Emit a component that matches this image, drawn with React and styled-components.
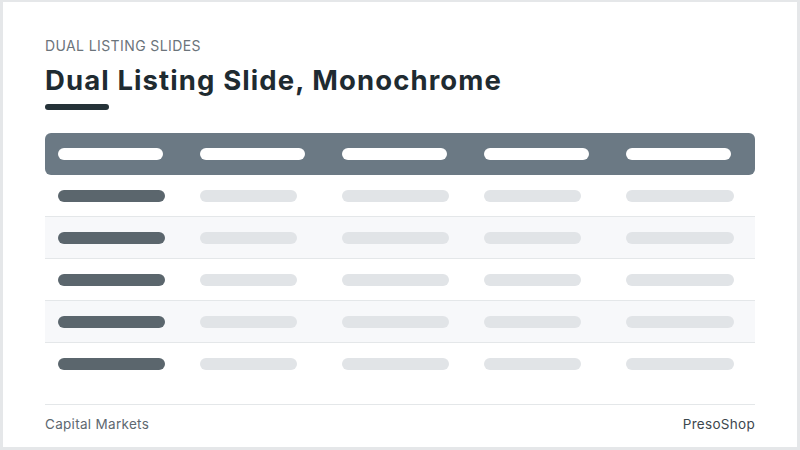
import React from "react";
import styled, { createGlobalStyle } from "styled-components";

const Global = createGlobalStyle`
  html, body { margin: 0; padding: 0; background: #ffffff; }
  * { box-sizing: border-box; }
`;

const Slide = styled.div`
  width: 800px;
  height: 450px;
  border: 3px solid #e5e7e9;
  border-top-width: 2px;
  background: #ffffff;
  padding: 34px 42px 0 42px;
  font-family: "Inter", "Noto Sans", sans-serif;
  display: flex;
  flex-direction: column;
`;

const Eyebrow = styled.div`
  font-size: 14px;
  line-height: 20px;
  color: #6b747b;
  letter-spacing: 0.4px;
`;

const Title = styled.h1`
  margin: 7px 0 0 0;
  font-size: 27.5px;
  line-height: 34px;
  font-weight: 700;
  color: #1f2b31;
  letter-spacing: 1.1px;
`;

const Accent = styled.div`
  width: 64px;
  height: 6px;
  border-radius: 3px;
  background: #253238;
  margin-top: 7px;
`;

const Table = styled.div`
  margin-top: 23px;
  display: flex;
  flex-direction: column;
`;

const Row = styled.div`
  display: grid;
  grid-template-columns: repeat(5, 1fr);
  height: 42px;
  align-items: center;
  background: ${(p) => (p.$head ? "#6b7984" : p.$shade ? "#f7f8fa" : "#ffffff")};
  border-radius: ${(p) => (p.$head ? "6px" : "0")};
  border-bottom: ${(p) => (p.$line ? "1px solid #e4e7e9" : "none")};
`;

const Cell = styled.div`
  padding-left: 13px;
  display: flex;
  align-items: center;
`;

const Pill = styled.div`
  height: 12px;
  border-radius: 6px;
  width: ${(p) => p.$w}px;
  background: ${(p) =>
    p.$tone === "head" ? "#ffffff" : p.$tone === "dark" ? "#5b666d" : "#e1e4e7"};
`;

const Footer = styled.div`
  margin-top: 19px;
  border-top: 1px solid #e4e7e9;
  display: flex;
  justify-content: space-between;
  align-items: center;
  padding-top: 10px;
  font-size: 13.5px;
  line-height: 18px;
  letter-spacing: 0.3px;
`;

const FootLeft = styled.span`
  color: #5e6870;
`;

const FootRight = styled.span`
  color: #3d474e;
`;

const bodyWidths = [107, 97, 107, 97, 108];

export default function App() {
  const rows = [0, 1, 2, 3, 4];
  return (
    <>
      <Global />
      <Slide>
        <Eyebrow>DUAL LISTING SLIDES</Eyebrow>
        <Title>Dual Listing Slide, Monochrome</Title>
        <Accent />
        <Table>
          <Row $head>
            {bodyWidths.map((_, i) => (
              <Cell key={i}>
                <Pill $tone="head" $w={105} />
              </Cell>
            ))}
          </Row>
          {rows.map((r) => (
            <Row key={r} $shade={r % 2 === 1} $line={r < 4}>
              {bodyWidths.map((w, i) => (
                <Cell key={i}>
                  <Pill $tone={i === 0 ? "dark" : "light"} $w={w} />
                </Cell>
              ))}
            </Row>
          ))}
        </Table>
        <Footer>
          <FootLeft>Capital Markets</FootLeft>
          <FootRight>PresoShop</FootRight>
        </Footer>
      </Slide>
    </>
  );
}
